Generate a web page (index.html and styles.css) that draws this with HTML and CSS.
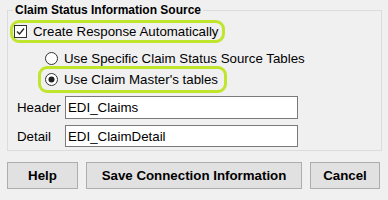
FILE: index.html
```html
<!DOCTYPE html>
<html lang="en">
<head>
    <meta charset="UTF-8">
    <title>Claim Status Information Source</title>
    <link rel="stylesheet" href="styles.css">
</head>
<body>
    <fieldset class="group">
        <legend>Claim Status Information Source</legend>

        <label class="highlight hl-check">
            <span class="box">
                <svg width="13" height="13" viewBox="0 0 13 13">
                    <rect x="0.5" y="0.5" width="12" height="12" fill="#fff" stroke="#333"/>
                    <path d="M3 6.5 L5.5 9 L10 3.5" fill="none" stroke="#222" stroke-width="1.3"/>
                </svg>
            </span>
            Create Response Automatically
        </label>

        <label class="option">
            <span class="box">
                <svg width="13" height="13" viewBox="0 0 13 13">
                    <circle cx="6.5" cy="6.5" r="6" fill="#fff" stroke="#333"/>
                </svg>
            </span>
            Use Specific Claim Status Source Tables
        </label>

        <label class="highlight hl-radio">
            <span class="box">
                <svg width="13" height="13" viewBox="0 0 13 13">
                    <circle cx="6.5" cy="6.5" r="6" fill="#fff" stroke="#333"/>
                    <circle cx="6.5" cy="6.5" r="3" fill="#222"/>
                </svg>
            </span>
            Use Claim Master's tables
        </label>

        <div class="field first">
            <span class="field-label">Header</span>
            <span class="text-input">EDI_Claims</span>
        </div>
        <div class="field">
            <span class="field-label">Detail</span>
            <span class="text-input">EDI_ClaimDetail</span>
        </div>
    </fieldset>

    <div class="buttons">
        <button class="btn btn-help">Help</button>
        <button class="btn btn-save">Save Connection Information</button>
        <button class="btn btn-cancel">Cancel</button>
    </div>
</body>
</html>
```

FILE: styles.css
```css
* {
    box-sizing: border-box;
}

body {
    margin: 0;
    padding: 3px 7px 0 7px;
    background: #f0f0f0;
    font-family: 'Liberation Sans', Arial, sans-serif;
    font-size: 13.3px;
    color: #000;
    width: 388px;
    height: 200px;
    overflow: hidden;
}

.group {
    margin: 0;
    padding: 0 0 3px 0;
    width: 375px;
    border: 1px solid #dcdcdc;
    min-width: 0;
}

.group legend {
    margin-left: 5px;
    padding: 0 2px;
    font-size: 12px;
    font-weight: bold;
    line-height: 14px;
}

.highlight {
    display: flex;
    align-items: center;
    border: 3px solid #bfe52c;
    border-radius: 9px;
    width: max-content;
}

.box {
    display: flex;
    width: 13px;
    height: 13px;
    margin-right: 6px;
}

.hl-check {
    margin: 3px 0 0 2px;
    height: 23px;
    padding: 0 3px 0 1px;
}

.option {
    display: flex;
    align-items: center;
    height: 16px;
    margin: 7px 0 0 37px;
}

.hl-radio {
    margin: 0 0 0 30px;
    height: 27px;
    padding: 0 6px 0 4px;
}

.field {
    display: flex;
    align-items: center;
    margin-top: 6px;
    height: 22px;
}

.field.first {
    margin-top: 3px;
    height: 23px;
}

.field-label {
    width: 57px;
    padding-left: 9px;
}

.text-input {
    display: flex;
    align-items: center;
    width: 233px;
    height: 100%;
    padding-left: 2px;
    background: #fff;
    border: 1px solid #7a7a7a;
}

.buttons {
    display: flex;
    gap: 8px;
    margin-top: 11px;
}

.btn {
    height: 27px;
    padding: 0;
    background: #e1e1e1;
    border: 1px solid #adadad;
    font-family: 'Liberation Sans', Arial, sans-serif;
    font-size: 13.3px;
    font-weight: bold;
    color: #000;
}

.btn-help {
    width: 71px;
}

.btn-save {
    width: 216px;
}

.btn-cancel {
    width: 70px;
}
```
